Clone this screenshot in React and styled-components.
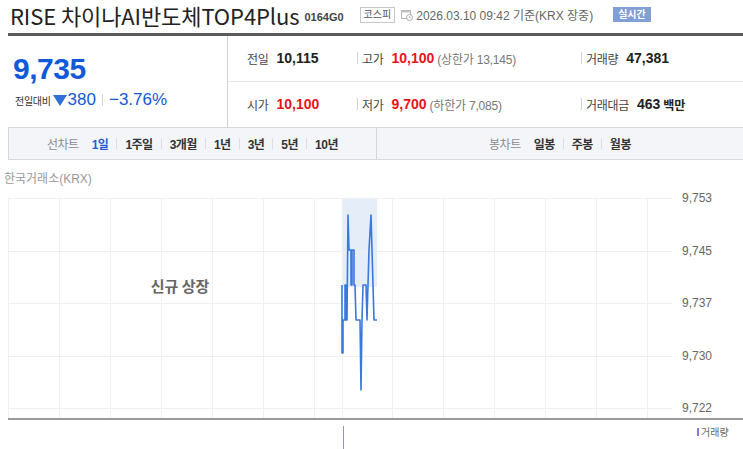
import React from "react";
import styled, { createGlobalStyle } from "styled-components";

const GlobalStyle = createGlobalStyle`
  body {
    margin: 0;
    background: #fff;
    font-family: "Liberation Sans", "Noto Sans CJK KR", sans-serif;
  }
`;

const Page = styled.div`
  width: 743px;
  height: 449px;
  overflow: hidden;
`;

const Header = styled.div`
  display: flex;
  align-items: center;
  height: 29px;
  padding: 0 0 4px 10px;
  white-space: nowrap;
`;

const Title = styled.h1`
  margin: 0;
  font: 400 22px/26px "Noto Sans CJK KR", sans-serif;
  color: #222;
  letter-spacing: -0.1px;
`;

const Code = styled.span`
  margin: 5px 0 0 5px;
  font: bold 11px "Liberation Sans", sans-serif;
  color: #444;
`;

const MarketBadge = styled.span`
  margin-left: 16px;
  height: 14px;
  padding: 0 3px;
  border: 1px solid #c8c8c8;
  font-size: 10px;
  line-height: 14px;
  color: #555;
`;

const CalendarIcon = styled.svg`
  margin-left: 6px;
  flex: none;
`;

const DateText = styled.span`
  margin-left: 3px;
  font-size: 12px;
  color: #666;
`;

const LiveBadge = styled.span`
  margin-left: 20px;
  padding: 1px 5px;
  background: #809fd4;
  color: #fff;
  font-size: 10px;
  font-weight: bold;
  line-height: 13px;
`;

const Summary = styled.div`
  display: grid;
  grid-template-columns: 220px 1fr;
  height: 91px;
  margin-left: 8px;
  border-top: 3px solid #5c5c5c;
  border-bottom: 1px solid #d6d6d6;
`;

const PricePanel = styled.div`
  padding: 17px 0 0 5px;
  border-right: 1px solid #d0d0d0;
`;

const Price = styled.div`
  font-size: 30px;
  font-weight: bold;
  line-height: 32px;
  color: #1159d6;
  letter-spacing: -0.5px;
`;

const ChangeRow = styled.div`
  display: flex;
  align-items: center;
  height: 20px;
  margin-top: 5px;
  padding-left: 2px;
`;

const ChangeLabel = styled.span`
  font-size: 10px;
  color: #333;
  letter-spacing: -0.3px;
`;

const ChangeValue = styled.span`
  font-size: 17px;
  color: #1159d6;
`;

const Divider = styled.span`
  width: 1px;
  height: ${(p) => p.h ?? 12}px;
  margin: 0 ${(p) => p.gap ?? 6}px;
  background: ${(p) => p.color || "#d3d3d3"};
  flex: none;
`;

const StatsPanel = styled.div`
  display: grid;
  grid-template-rows: 1fr 1fr;
`;

const StatsRow = styled.div`
  display: grid;
  grid-template-columns: 129px 224px 1fr;
  align-items: center;
  border-bottom: ${(p) => (p.last ? "none" : "1px solid #e8e8e8")};
`;

const StatCell = styled.div`
  display: flex;
  align-items: center;
  white-space: nowrap;
  padding-left: ${(p) => (p.first ? 19 : 0)}px;
`;

const StatLabel = styled.span`
  margin-left: ${(p) => (p.first ? 0 : 4)}px;
  margin-right: 8px;
  font-size: 12px;
  color: #444;
  letter-spacing: -0.3px;
`;

const StatValue = styled.span`
  font-size: 14px;
  font-weight: bold;
  color: ${(p) => (p.red ? "#e8141c" : "#222")};
`;

const Unit = styled.span`
  margin-left: 3px;
  font-size: 12px;
  font-weight: bold;
  color: #222;
`;

const StatSub = styled.span`
  margin-left: 3px;
  font-size: 12px;
  color: #777;
  letter-spacing: -0.2px;
`;

const TabBar = styled.div`
  display: grid;
  grid-template-columns: 368px 1fr;
  height: 31px;
  margin-left: 8px;
  background: #f3f5f9;
  border-left: 1px solid #d5d8de;
  border-bottom: 1px solid #d5d8de;
`;

const TabGroup = styled.div`
  display: flex;
  align-items: center;
  justify-content: center;
  border-right: ${(p) => (p.divided ? "1px solid #d2d5dc" : "none")};
`;

const TabLabel = styled.span`
  margin-right: 13px;
  font-size: 12px;
  color: #8c8c8c;
  letter-spacing: -0.5px;
`;

const TabItem = styled.span`
  font-size: 12px;
  font-weight: bold;
  color: ${(p) => (p.active ? "#2a5bd7" : "#333")};
  letter-spacing: -0.5px;
`;

const Source = styled.div`
  margin-top: 11px;
  padding-left: 4px;
  font-size: 12px;
  line-height: 16px;
  color: #999;
`;

const ChartArea = styled.div`
  height: 259px;
  margin-top: 3px;
`;

const Chart = styled.svg`
  display: block;
`;

const verticals = [8, 59, 110, 161, 212, 263, 314, 342, 392, 443, 494, 545, 596, 647];
const levels = [
  { y: 8, label: "9,753" },
  { y: 61, label: "9,745" },
  { y: 113, label: "9,737" },
  { y: 166, label: "9,730" },
  { y: 218, label: "9,722" },
];
const pricePath = [
  [342, 95], [342, 163], [343, 163], [343, 130], [345, 130], [345, 95], [346, 95],
  [346, 130], [347, 130], [348, 25], [349, 60], [351, 60], [351, 95], [352, 95],
  [352, 60], [354, 60], [354, 95], [355, 95], [356, 130], [360, 130], [361, 200],
  [362, 130], [363, 95], [366, 95], [367, 130], [368, 95], [369, 60], [371, 25],
  [372, 60], [373, 95], [374, 130], [377, 130],
];

const lineTabs = ["1일", "1주일", "3개월", "1년", "3년", "5년", "10년"];
const candleTabs = ["일봉", "주봉", "월봉"];

const Tabs = ({ label, items, divided }) => (
  <TabGroup divided={divided}>
    <TabLabel>{label}</TabLabel>
    {items.map((t, i) => (
      <React.Fragment key={t}>
        {i > 0 && <Divider h={11} gap={8} color="#dadce0" />}
        <TabItem active={divided && i === 0}>{t}</TabItem>
      </React.Fragment>
    ))}
  </TabGroup>
);

export default function App() {
  return (
    <Page>
      <GlobalStyle />
      <Header>
        <Title>RISE 차이나AI반도체TOP4Plus</Title>
        <Code>0164G0</Code>
        <MarketBadge>코스피</MarketBadge>
        <CalendarIcon width="12" height="12" viewBox="0 0 12 12">
          <rect x="0.5" y="1.5" width="9" height="8" fill="#fff" stroke="#b5b5b5" />
          <rect x="0.5" y="1.5" width="9" height="2" fill="#c4c4c4" />
          <circle cx="8.5" cy="8.5" r="3" fill="#fff" stroke="#a8a8a8" />
          <path d="M8.5 7v1.6h1.2" fill="none" stroke="#a8a8a8" strokeWidth="0.8" />
        </CalendarIcon>
        <DateText>2026.03.10 09:42 기준(KRX 장중)</DateText>
        <LiveBadge>실시간</LiveBadge>
      </Header>

      <Summary>
        <PricePanel>
          <Price>9,735</Price>
          <ChangeRow>
            <ChangeLabel>전일대비</ChangeLabel>
            <svg width="14" height="11" viewBox="0 0 14 11" style={{ margin: "0 1px 0 2px" }}>
              <path d="M0 0h14L7 11z" fill="#2f6fd8" />
            </svg>
            <ChangeValue>380</ChangeValue>
            <Divider h={12} gap={6} />
            <ChangeValue>−3.76%</ChangeValue>
          </ChangeRow>
        </PricePanel>
        <StatsPanel>
          <StatsRow>
            <StatCell first>
              <StatLabel first>전일</StatLabel>
              <StatValue>10,115</StatValue>
            </StatCell>
            <StatCell>
              <Divider h={12} gap={0} />
              <StatLabel>고가</StatLabel>
              <StatValue red>10,100</StatValue>
              <StatSub>(상한가 13,145)</StatSub>
            </StatCell>
            <StatCell>
              <Divider h={12} gap={0} />
              <StatLabel>거래량</StatLabel>
              <StatValue>47,381</StatValue>
            </StatCell>
          </StatsRow>
          <StatsRow last>
            <StatCell first>
              <StatLabel first>시가</StatLabel>
              <StatValue red>10,100</StatValue>
            </StatCell>
            <StatCell>
              <Divider h={12} gap={0} />
              <StatLabel>저가</StatLabel>
              <StatValue red>9,700</StatValue>
              <StatSub>(하한가 7,085)</StatSub>
            </StatCell>
            <StatCell>
              <Divider h={12} gap={0} />
              <StatLabel>거래대금</StatLabel>
              <StatValue>463</StatValue>
              <Unit>백만</Unit>
            </StatCell>
          </StatsRow>
        </StatsPanel>
      </Summary>

      <TabBar>
        <Tabs label="선차트" items={lineTabs} divided />
        <Tabs label="봉차트" items={candleTabs} />
      </TabBar>

      <Source>한국거래소(KRX)</Source>

      <ChartArea>
        <Chart width="743" height="259" viewBox="0 0 743 259">
          <rect x="342" y="8" width="35" height="89" fill="#e5edf9" />
          {levels.map((l) => (
            <line key={l.y} x1="8" x2="672" y1={l.y + 0.5} y2={l.y + 0.5} stroke="#efefef" />
          ))}
          {verticals.map((x) => (
            <line key={x} x1={x + 0.5} x2={x + 0.5} y1="8" y2="229" stroke="#efefef" />
          ))}
          {levels.map((l) => (
            <text
              key={l.label}
              x="682"
              y={l.y + 4}
              fontSize="12"
              fill="#666"
              fontFamily="Liberation Sans, sans-serif"
            >
              {l.label}
            </text>
          ))}
          <text
            x="180"
            y="102"
            textAnchor="middle"
            fontSize="15"
            fontWeight="bold"
            fill="#666"
            fontFamily="Noto Sans CJK KR, sans-serif"
          >
            신규 상장
          </text>
          <polyline
            points={pricePath.map((p) => p.join(",")).join(" ")}
            fill="none"
            stroke="#3a78dd"
            strokeWidth="1.6"
            strokeLinejoin="round"
          />
          <line x1="8" x2="743" y1="229" y2="229" stroke="#9a9a9a" strokeWidth="2" />
          <line x1="343.5" x2="343.5" y1="236" y2="259" stroke="#9a88d8" />
          <rect x="697" y="238" width="2" height="8" fill="#8c78d0" />
          <text x="701" y="246" fontSize="10" fill="#666" fontFamily="Noto Sans CJK KR, sans-serif">
            거래량
          </text>
        </Chart>
      </ChartArea>
    </Page>
  );
}
